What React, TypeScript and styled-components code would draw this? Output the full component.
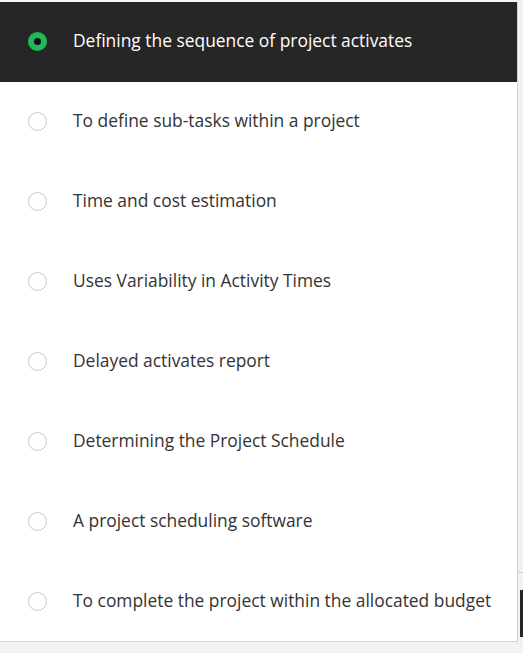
import React from 'react'
import styled, { createGlobalStyle } from 'styled-components'

const options = [
    'Defining the sequence of project activates',
    'To define sub-tasks within a project',
    'Time and cost estimation',
    'Uses Variability in Activity Times',
    'Delayed activates report',
    'Determining the Project Schedule',
    'A project scheduling software',
    'To complete the project within the allocated budget',
]

const selectedIndex = 0

const App: React.FunctionComponent = () => (
    <Page>
        <GlobalStyle />
        <Card>
            { options.map((label, index) => (
                <Option key={ index } selected={ index === selectedIndex }>
                    <Radio selected={ index === selectedIndex } />
                    <Label>{ label }</Label>
                </Option>
            )) }
        </Card>
        <Side>
            <SideLine />
            <SideDark />
        </Side>
    </Page>
)

export default App

const GlobalStyle = createGlobalStyle`
    html, body {
        margin: 0;
        padding: 0;
        background: #f2f2f2;
        font-family: "Open Sans", "Noto Sans", sans-serif;
    }
`

const Page = styled.div`
    display: flex;
    width: 523px;
    height: 653px;
    overflow: hidden;
    background: #f2f2f2;
`

const Card = styled.div`
    width: 518px;
    height: 642px;
    flex-shrink: 0;
    background: #ffffff;
    border-right: 1px solid #d4d4d4;
    border-bottom: 1px solid #d4d4d4;
    border-top: 2px solid #f4f4f4;
    box-sizing: border-box;
    display: flex;
    flex-direction: column;
`

const Option = styled.div<{ selected: boolean }>`
    height: 80px;
    flex-shrink: 0;
    display: flex;
    align-items: center;
    padding-left: 28px;
    padding-bottom: 2px;
    box-sizing: border-box;
    gap: 26px;
    background: ${ props => props.selected ? '#262626' : 'transparent' };
    color: ${ props => props.selected ? '#ffffff' : '#333333' };
`

const Radio = styled.span<{ selected: boolean }>`
    width: 19px;
    height: 19px;
    box-sizing: border-box;
    border-radius: 50%;
    flex-shrink: 0;
    border: ${ props => props.selected ? '6px solid #1fba58' : '1px solid #c8c8c8' };
    background: ${ props => props.selected ? '#111111' : '#ffffff' };
`

const Label = styled.span`
    font-size: 17.4px;
    white-space: nowrap;
    margin-top: -2px;
`

const Side = styled.div`
    flex: 1;
    display: flex;
    flex-direction: column;
    padding-top: 572px;
`

const SideLine = styled.div`
    height: 1px;
    background: #cfcfcf;
    margin-bottom: 17px;
`

const SideDark = styled.div`
    height: 47px;
    margin-left: 2px;
    background: #262626;
`
